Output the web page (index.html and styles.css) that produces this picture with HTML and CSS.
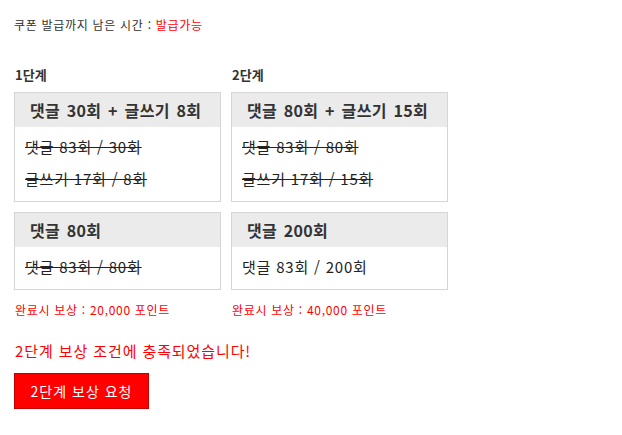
FILE: index.html
```html
<!DOCTYPE html>
<html lang="ko">
<head>
<meta charset="utf-8">
<title>쿠폰</title>
<link rel="stylesheet" href="styles.css">
</head>
<body>
<div class="page">
  <p class="timer">쿠폰 발급까지 남은 시간 : <span class="ok">발급가능</span></p>
  <div class="stages">
    <div class="stage stage-one">
      <div class="stage-title">1단계</div>
      <div class="box">
        <div class="box-head">댓글 30회 + 글쓰기 8회</div>
        <div class="box-body">
          <p class="line done">댓글 83회 / 30회</p>
          <p class="line done">글쓰기 17회 / 8회</p>
        </div>
      </div>
      <div class="box">
        <div class="box-head">댓글 80회</div>
        <div class="box-body">
          <p class="line done">댓글 83회 / 80회</p>
        </div>
      </div>
      <p class="reward">완료시 보상 : 20,000 포인트</p>
    </div>
    <div class="stage stage-two">
      <div class="stage-title">2단계</div>
      <div class="box">
        <div class="box-head">댓글 80회 + 글쓰기 15회</div>
        <div class="box-body">
          <p class="line done">댓글 83회 / 80회</p>
          <p class="line done">글쓰기 17회 / 15회</p>
        </div>
      </div>
      <div class="box">
        <div class="box-head">댓글 200회</div>
        <div class="box-body">
          <p class="line">댓글 83회 / 200회</p>
        </div>
      </div>
      <p class="reward">완료시 보상 : 40,000 포인트</p>
    </div>
  </div>
  <p class="message">2단계 보상 조건에 충족되었습니다!</p>
  <button class="claim" type="button">2단계 보상 요청</button>
</div>
</body>
</html>
```
FILE: styles.css
```css
html, body {
  margin: 0;
  padding: 0;
  background: #ffffff;
}
body {
  font-family: "Noto Sans CJK KR", "Noto Sans", sans-serif;
  color: #333333;
}
p {
  margin: 0;
}
.page {
  padding: 18px 0 0 14px;
}
.timer {
  font-size: 12px;
  line-height: 14px;
  color: #333333;
  letter-spacing: 0.7px;
}
.ok {
  color: #ff0000;
}
.stages {
  display: flex;
  gap: 10px;
  margin-top: 36px;
}
.stage {
  display: flex;
  flex-direction: column;
}
.stage-one {
  width: 207px;
}
.stage-two {
  width: 217px;
}
.stage-title {
  font-size: 13px;
  line-height: 14px;
  font-weight: bold;
  color: #333333;
  padding-left: 1px;
  margin-bottom: 10px;
}
.box {
  border: 1px solid #d5d5d5;
  margin-bottom: 10px;
}
.box-head {
  background: #ebebeb;
  height: 34px;
  line-height: 34px;
  padding-left: 15px;
  font-size: 16px;
  font-weight: bold;
  color: #333333;
  word-spacing: 2px;
  letter-spacing: 0.3px;
}
.box-body {
  padding: 10px 10px 12px 10px;
  display: flex;
  flex-direction: column;
  gap: 12px;
}
.line {
  font-size: 15px;
  line-height: 20px;
  color: #222222;
  letter-spacing: 0.8px;
}
.line.done {
  text-decoration: line-through;
}
.reward {
  margin-top: 3px;
  font-size: 12px;
  line-height: 14px;
  color: #ff0000;
  padding-left: 1px;
  letter-spacing: 0.7px;
}
.message {
  margin-top: 25px;
  font-size: 15px;
  line-height: 18px;
  color: #ff0000;
  padding-left: 1px;
  letter-spacing: 0.9px;
}
.claim {
  margin-top: 13px;
  width: 135px;
  height: 36px;
  background: #ff0000;
  border: 1px solid #c00000;
  color: #ffffff;
  font-family: "Noto Sans CJK KR", "Noto Sans", sans-serif;
  font-size: 14px;
  letter-spacing: 1px;
  padding: 0;
  cursor: pointer;
}
```
